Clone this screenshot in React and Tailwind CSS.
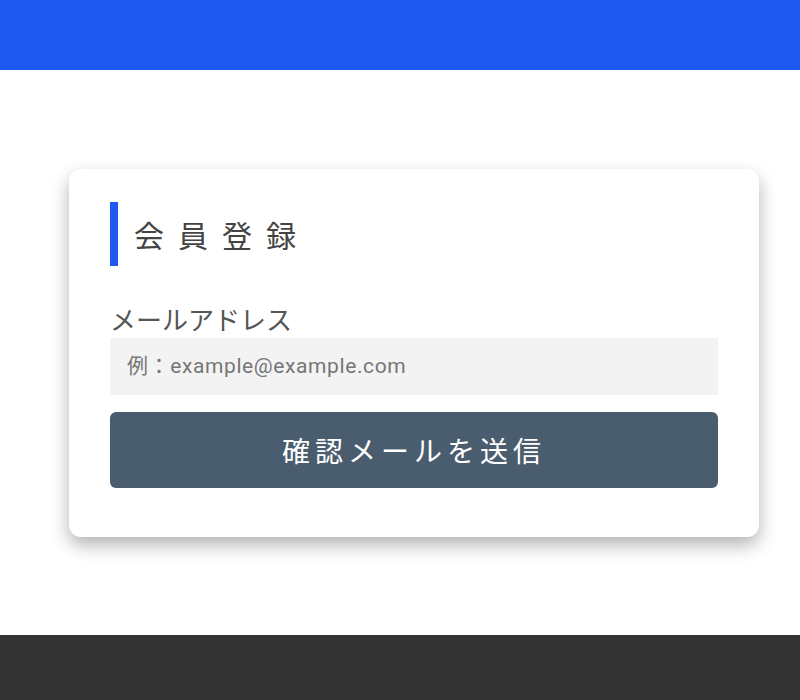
function App() {
  return (
    <div className="flex min-h-[700px] flex-col bg-white" style={{ fontFamily: '"Noto Sans CJK JP", "Noto Sans", sans-serif' }}>
      <header className="h-[70px] bg-[#1f5af0]" />

      <main className="flex h-[565px] items-center">
        <div className="ml-[69px] w-[690px] rounded-xl bg-white px-[41px] pb-[49px] pt-[33px] shadow-[0_8px_18px_rgba(0,0,0,0.3)]">
          <div className="flex h-16 items-center border-l-8 border-[#1f5af0] pl-4">
            <h1 className="text-[30px] leading-none tracking-[14px] text-[#444]">会員登録</h1>
          </div>

          <form className="mt-[36px]">
            <label className="block text-[26px] leading-[34px] text-[#555]">メールアドレス</label>
            <input
              type="email"
              placeholder="例：example@example.com"
              className="mt-[2px] block h-[57px] w-full bg-[#f3f3f3] px-[17px] text-[21px] tracking-[0.6px] text-[#555] outline-none placeholder:text-[#767676]"
              style={{ fontFamily: 'Roboto, "Noto Sans CJK JP", sans-serif' }}
            />
            <button
              type="button"
              className="mt-[17px] block h-[76px] w-full rounded-md bg-[#4a5d6e] text-[28px] tracking-[5px] text-white"
            >
              確認メールを送信
            </button>
          </form>
        </div>
      </main>

      <footer className="h-[65px] bg-[#333]" />
    </div>
  )
}

export default App
